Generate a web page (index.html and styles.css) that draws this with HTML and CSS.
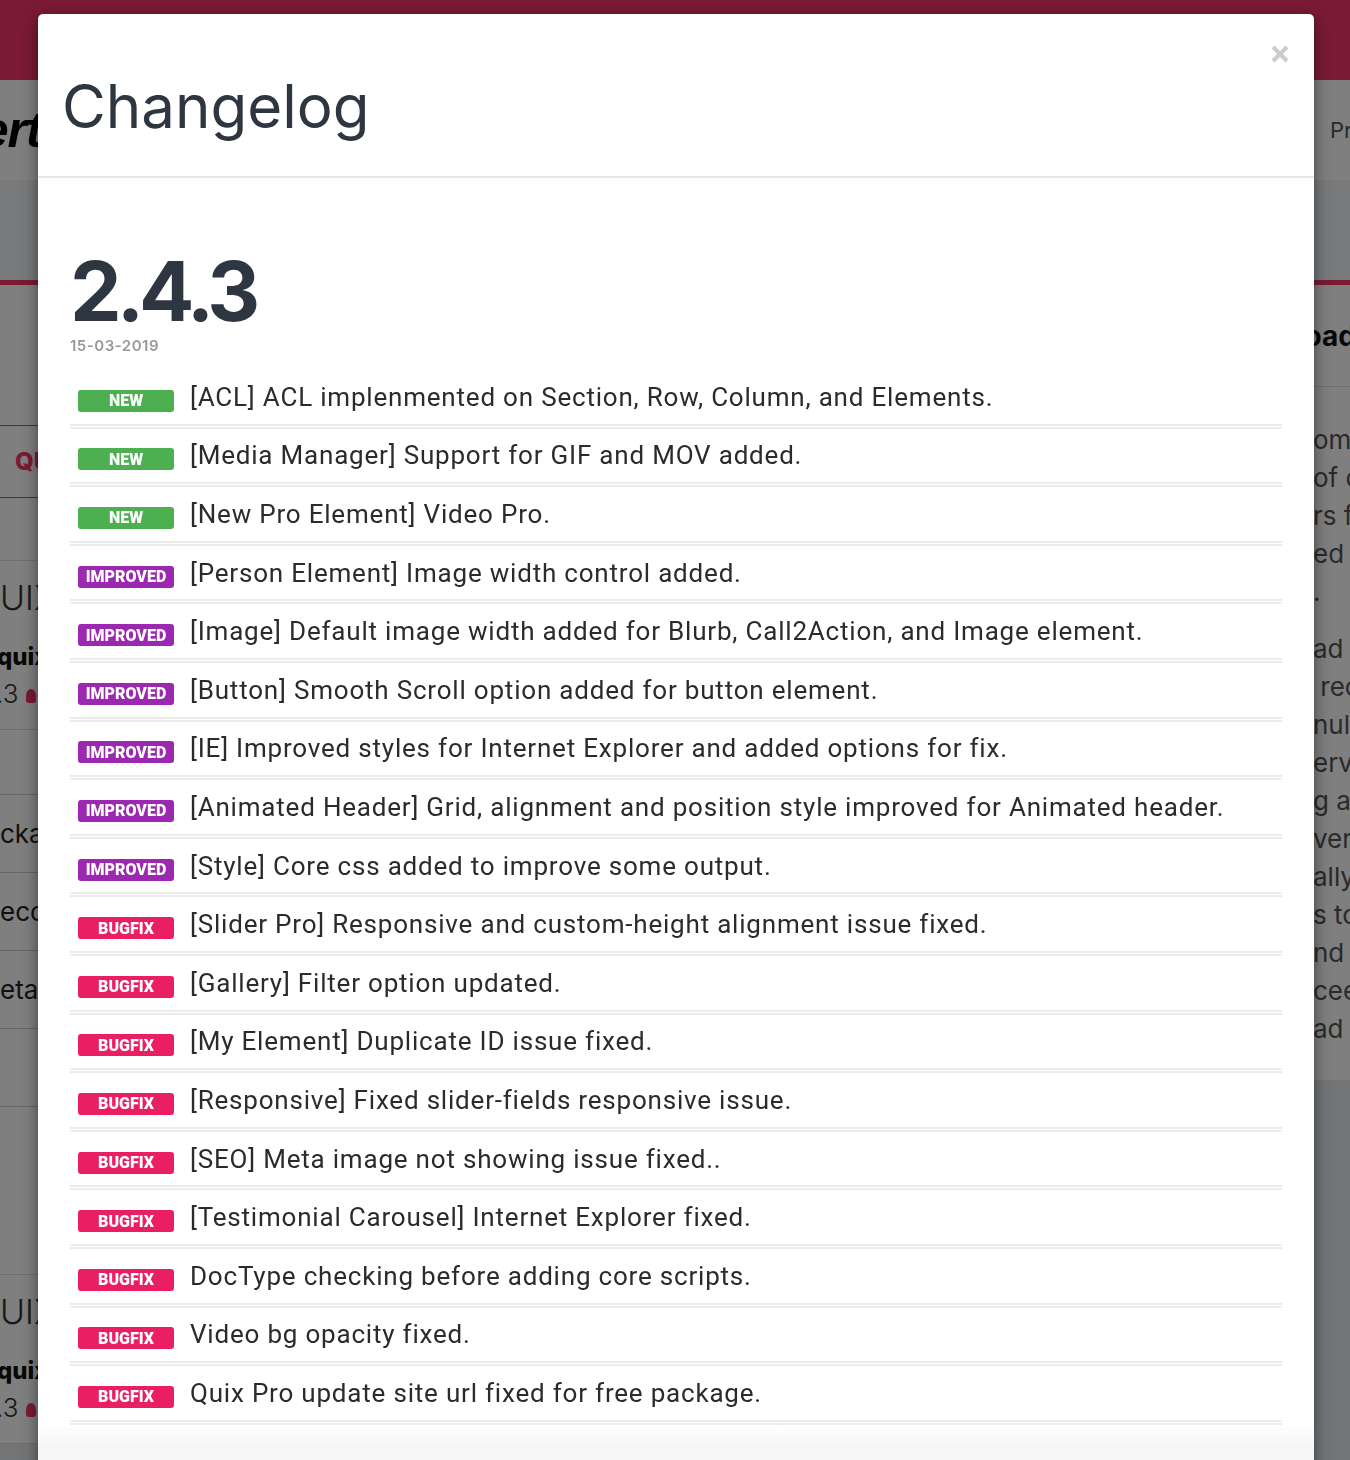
FILE: index.html
```html
<!DOCTYPE html>
<html lang="en">
<head>
    <meta charset="UTF-8">
    <meta name="viewport" content="width=device-width, initial-scale=1.0">
    <title>Changelog</title>
    <link rel="stylesheet" href="styles.css">
</head>
<body>
    <div class="page">
        <div class="topbar"></div>
        <header class="site-head">
            <div class="logo">Expert</div>
            <nav class="nav">Pricing</nav>
        </header>
        <div class="band"></div>
        <div class="main">
            <aside class="col-left">
                <div class="tab">QUIX</div>
                <div class="card">
                    <div class="card-title">UIX</div>
                    <div class="card-sub">quix</div>
                    <div class="card-ver">.3 <span class="drop"></span></div>
                </div>
                <div class="meta">
                    <div class="meta-row">ckage</div>
                    <div class="meta-row">ecord</div>
                    <div class="meta-row">eta )</div>
                    <div class="meta-row"></div>
                </div>
                <div class="card">
                    <div class="card-title">UIX</div>
                    <div class="card-sub">quix</div>
                    <div class="card-ver">.3 <span class="drop"></span></div>
                </div>
            </aside>
            <div class="col-mid"></div>
            <aside class="col-right">
                <div class="side-title">load</div>
                <div class="side-text">
                    <p>omni</p>
                    <p>of ou</p>
                    <p>rs fo</p>
                    <p>ed</p>
                    <p>.</p>
                    <p class="gap">ad m</p>
                    <p>&nbsp;rec</p>
                    <p>nult</p>
                    <p>erver</p>
                    <p>g as</p>
                    <p>ver</p>
                    <p>ally</p>
                    <p>s to</p>
                    <p>nd r</p>
                    <p>ceed</p>
                    <p>ad li</p>
                </div>
            </aside>
        </div>
    </div>

    <div class="overlay"></div>

    <div class="modal">
        <div class="modal-header">
            <h1>Changelog</h1>
            <button class="close" aria-label="Close">
                <svg width="20" height="20" viewBox="0 0 20 20">
                    <path d="M3 3 L17 17 M17 3 L3 17" stroke="#cccccc" stroke-width="4.2" fill="none"/>
                </svg>
            </button>
        </div>
        <div class="modal-body">
            <div class="version">2.4.3</div>
            <div class="date">15-03-2019</div>
            <ul class="changes">
                <li><span class="badge new">NEW</span>[ACL] ACL implenmented on Section, Row, Column, and Elements.</li>
                <li><span class="badge new">NEW</span>[Media Manager] Support for GIF and MOV added.</li>
                <li><span class="badge new">NEW</span>[New Pro Element] Video Pro.</li>
                <li><span class="badge improved">IMPROVED</span>[Person Element] Image width control added.</li>
                <li><span class="badge improved">IMPROVED</span>[Image] Default image width added for Blurb, Call2Action, and Image element.</li>
                <li><span class="badge improved">IMPROVED</span>[Button] Smooth Scroll option added for button element.</li>
                <li><span class="badge improved">IMPROVED</span>[IE] Improved styles for Internet Explorer and added options for fix.</li>
                <li><span class="badge improved">IMPROVED</span>[Animated Header] Grid, alignment and position style improved for Animated header.</li>
                <li><span class="badge improved">IMPROVED</span>[Style] Core css added to improve some output.</li>
                <li><span class="badge bugfix">BUGFIX</span>[Slider Pro] Responsive and custom-height alignment issue fixed.</li>
                <li><span class="badge bugfix">BUGFIX</span>[Gallery] Filter option updated.</li>
                <li><span class="badge bugfix">BUGFIX</span>[My Element] Duplicate ID issue fixed.</li>
                <li><span class="badge bugfix">BUGFIX</span>[Responsive] Fixed slider-fields responsive issue.</li>
                <li><span class="badge bugfix">BUGFIX</span>[SEO] Meta image not showing issue fixed..</li>
                <li><span class="badge bugfix">BUGFIX</span>[Testimonial Carousel] Internet Explorer fixed.</li>
                <li><span class="badge bugfix">BUGFIX</span>DocType checking before adding core scripts.</li>
                <li><span class="badge bugfix">BUGFIX</span>Video bg opacity fixed.</li>
                <li><span class="badge bugfix">BUGFIX</span>Quix Pro update site url fixed for free package.</li>
            </ul>
        </div>
        <div class="modal-footer"></div>
    </div>
</body>
</html>
```

FILE: styles.css
```css
body {
    margin: 0;
    height: 1460px;
    overflow: hidden;
    font-family: Inter, "Noto Sans", sans-serif;
    background: #e6e9ec;
}

/* page behind the modal */
.page { width: 1350px; }
.topbar { height: 80px; background: #f43466; }
.site-head {
    height: 100px;
    background: #ffffff;
    display: flex;
    align-items: center;
    justify-content: space-between;
}
.logo {
    margin-left: -108px;
    font-family: "Liberation Sans", sans-serif;
    font-weight: bold;
    font-style: italic;
    font-size: 50px;
    letter-spacing: -1px;
    color: #000;
}
.nav {
    flex: 0 0 20px;
    overflow: hidden;
    white-space: nowrap;
    font-size: 22px;
    color: #555;
}
.band { height: 100px; background: #eef2f6; border-bottom: 5px solid #f43466; }

.main { display: flex; }
.col-left {
    flex: 0 0 38px;
    overflow: hidden;
    white-space: nowrap;
    background: #ffffff;
}
.col-mid { flex: 1; }
.col-right {
    flex: 0 0 40px;
    overflow: hidden;
    white-space: nowrap;
    background: #ffffff;
    height: 795px;
}

.tab {
    margin-top: 140px;
    height: 71px;
    border-top: 1px solid #f43466;
    border-bottom: 1px solid #f43466;
    display: flex;
    align-items: center;
    padding-left: 15px;
    font-weight: 800;
    font-size: 24px;
    color: #f43466;
}
.card {
    margin-top: 62px;
    border-top: 1px solid #ddd;
    padding-top: 16px;
    height: 152px;
    border-bottom: 1px solid #ddd;
}
.card-title { font-size: 34px; font-weight: 300; color: #333; }
.card-sub { font-size: 24px; font-weight: 800; color: #111; margin-top: 24px; margin-left: -3px; }
.card-ver { font-size: 26px; font-weight: 300; color: #333; margin-top: 7px; margin-left: -4px; }
.drop {
    display: inline-block;
    width: 10px;
    height: 14px;
    background: #f43466;
    border-radius: 50% 50% 3px 3px;
}
.meta-row {
    height: 77px;
    border-bottom: 1px solid #ccc;
    font-size: 26px;
    color: #222;
    display: flex;
    align-items: center;
}
.meta-row:first-child { border-top: 1px solid #ccc; margin-top: 64px; }
.col-left .card:last-child { margin-top: 167px; }

.side-title {
    height: 101px;
    border-bottom: 1px solid #ddd;
    display: flex;
    align-items: center;
    font-size: 28px;
    font-weight: 700;
    color: #111;
    margin-left: -13px;
}
.side-text { padding-top: 34px; margin-left: 3px; }
.side-text p {
    margin: 0;
    height: 38px;
    line-height: 38px;
    font-size: 26px;
    color: #555;
}
.side-text .gap { margin-top: 19px; }

.overlay {
    position: fixed;
    inset: 0;
    background: rgba(0, 0, 0, 0.5);
}

/* modal */
.modal {
    position: absolute;
    top: 14px;
    left: 38px;
    width: 1276px;
    background: #ffffff;
    border-radius: 5px;
    box-shadow: 0 5px 15px rgba(0, 0, 0, 0.5);
}
.modal-header {
    position: relative;
    padding: 59px 24px 37px;
    border-bottom: 2px solid #e6e6e6;
}
.modal-header h1 {
    margin: 0;
    font-family: Inter, sans-serif;
    font-weight: 400;
    font-size: 60px;
    line-height: 66px;
    color: #2e3641;
}
.close {
    position: absolute;
    top: 30px;
    right: 24px;
    padding: 0;
    border: none;
    background: none;
    cursor: pointer;
}
.close svg { display: block; }

.modal-body { padding: 72px 32px 0; }
.version {
    font-family: Inter, sans-serif;
    font-weight: 700;
    font-size: 82px;
    line-height: 84px;
    letter-spacing: -5px;
    margin-bottom: 3px;
    color: #2e3641;
}
.date {
    font-family: Inter, sans-serif;
    font-weight: 600;
    font-size: 15px;
    line-height: 18px;
    letter-spacing: 0.5px;
    color: #999;
}
.changes {
    list-style: none;
    margin: 15px 0 0;
    padding: 0;
}
.changes li {
    height: 53.6px;
    padding: 0 8px;
    display: flex;
    align-items: center;
    border-bottom: 5px double #ececec;
    font-family: Roboto, sans-serif;
    font-weight: 400;
    font-size: 26px;
    letter-spacing: 0.8px;
    color: #2b2b2b;
    white-space: nowrap;
}
.badge {
    flex: 0 0 96px;
    height: 22px;
    margin: 8px 16px 0 0;
    border-radius: 3px;
    display: flex;
    align-items: center;
    justify-content: center;
    font-family: Roboto, sans-serif;
    font-weight: 900;
    font-size: 16px;
    letter-spacing: 0;
    color: #fff;
}
.new { background: #4caf50; }
.improved { background: #9c27b0; }
.bugfix { background: #e91e63; }

.modal-footer {
    height: 60px;
    margin-top: 2px;
    background: linear-gradient(#fdfdfd, #f6f6f6 20px);
}
```
